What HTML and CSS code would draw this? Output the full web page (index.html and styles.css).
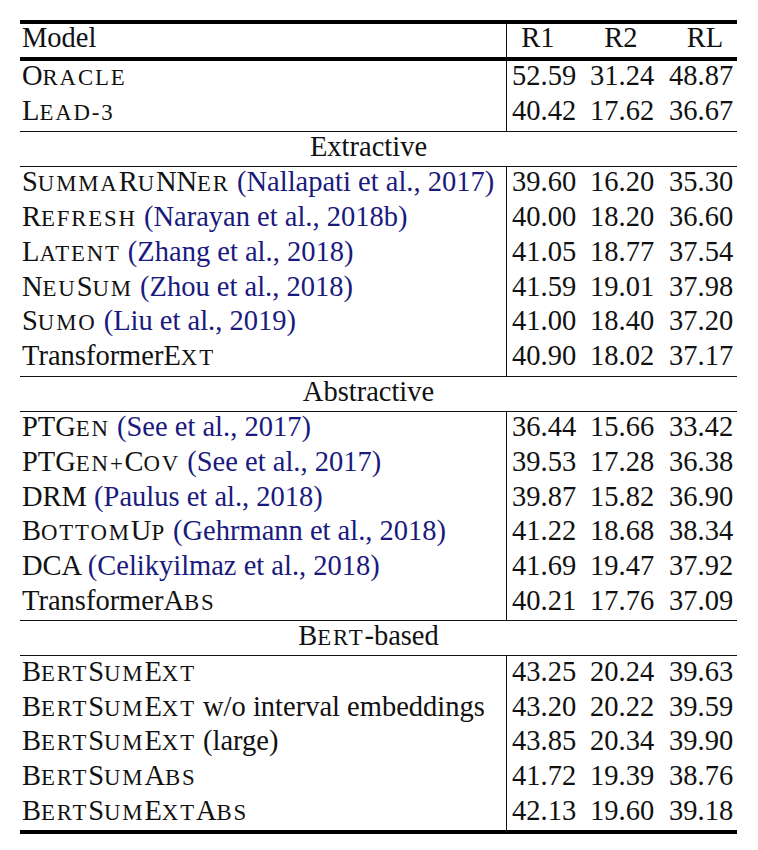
FILE: index.html
```html
<!DOCTYPE html>
<html>
<head>
<meta charset="utf-8">
<title>Results table</title>
<link rel="stylesheet" href="styles.css">
</head>
<body>
<table class="results">
  <colgroup>
    <col class="c-model">
    <col class="c-r1">
    <col class="c-r2">
    <col class="c-rl">
  </colgroup>
  <thead>
    <tr class="head">
      <th class="model">Model</th>
      <th class="n1">R1</th>
      <th class="n2">R2</th>
      <th class="n3">RL</th>
    </tr>
  </thead>
  <tbody class="first">
    <tr><td class="model">O<span class="sc">racle</span></td><td class="n1">52.59</td><td class="n2">31.24</td><td class="n3">48.87</td></tr>
    <tr><td class="model">L<span class="sc">ead-3</span></td><td class="n1">40.42</td><td class="n2">17.62</td><td class="n3">36.67</td></tr>
  </tbody>
  <tbody>
    <tr class="group"><td colspan="4">Extractive</td></tr>
    <tr><td class="model">S<span class="sc">umma</span>R<span class="sc">u</span>NN<span class="sc">er</span> <span class="cite">(Nallapati et al., 2017)</span></td><td class="n1">39.60</td><td class="n2">16.20</td><td class="n3">35.30</td></tr>
    <tr><td class="model">R<span class="sc">efresh</span> <span class="cite">(Narayan et al., 2018b)</span></td><td class="n1">40.00</td><td class="n2">18.20</td><td class="n3">36.60</td></tr>
    <tr><td class="model">L<span class="sc">atent</span> <span class="cite">(Zhang et al., 2018)</span></td><td class="n1">41.05</td><td class="n2">18.77</td><td class="n3">37.54</td></tr>
    <tr><td class="model">N<span class="sc">eu</span>S<span class="sc">um</span> <span class="cite">(Zhou et al., 2018)</span></td><td class="n1">41.59</td><td class="n2">19.01</td><td class="n3">37.98</td></tr>
    <tr><td class="model">S<span class="sc">umo</span> <span class="cite">(Liu et al., 2019)</span></td><td class="n1">41.00</td><td class="n2">18.40</td><td class="n3">37.20</td></tr>
    <tr><td class="model">TransformerE<span class="sc">xt</span></td><td class="n1">40.90</td><td class="n2">18.02</td><td class="n3">37.17</td></tr>
  </tbody>
  <tbody>
    <tr class="group"><td colspan="4">Abstractive</td></tr>
    <tr><td class="model">PTG<span class="sc">en</span> <span class="cite">(See et al., 2017)</span></td><td class="n1">36.44</td><td class="n2">15.66</td><td class="n3">33.42</td></tr>
    <tr><td class="model">PTG<span class="sc">en+</span>C<span class="sc">ov</span> <span class="cite">(See et al., 2017)</span></td><td class="n1">39.53</td><td class="n2">17.28</td><td class="n3">36.38</td></tr>
    <tr><td class="model">DRM <span class="cite">(Paulus et al., 2018)</span></td><td class="n1">39.87</td><td class="n2">15.82</td><td class="n3">36.90</td></tr>
    <tr><td class="model">B<span class="sc">ottom</span>U<span class="sc">p</span> <span class="cite">(Gehrmann et al., 2018)</span></td><td class="n1">41.22</td><td class="n2">18.68</td><td class="n3">38.34</td></tr>
    <tr><td class="model">DCA <span class="cite">(Celikyilmaz et al., 2018)</span></td><td class="n1">41.69</td><td class="n2">19.47</td><td class="n3">37.92</td></tr>
    <tr><td class="model">TransformerA<span class="sc">bs</span></td><td class="n1">40.21</td><td class="n2">17.76</td><td class="n3">37.09</td></tr>
  </tbody>
  <tbody class="last">
    <tr class="group"><td colspan="4">B<span class="sc">ert</span>-based</td></tr>
    <tr><td class="model">B<span class="sc">ert</span>S<span class="sc">um</span>E<span class="sc">xt</span></td><td class="n1">43.25</td><td class="n2">20.24</td><td class="n3">39.63</td></tr>
    <tr><td class="model">B<span class="sc">ert</span>S<span class="sc">um</span>E<span class="sc">xt</span> w/o interval embeddings</td><td class="n1">43.20</td><td class="n2">20.22</td><td class="n3">39.59</td></tr>
    <tr><td class="model">B<span class="sc">ert</span>S<span class="sc">um</span>E<span class="sc">xt</span> (large)</td><td class="n1">43.85</td><td class="n2">20.34</td><td class="n3">39.90</td></tr>
    <tr><td class="model">B<span class="sc">ert</span>S<span class="sc">um</span>A<span class="sc">bs</span></td><td class="n1">41.72</td><td class="n2">19.39</td><td class="n3">38.76</td></tr>
    <tr><td class="model">B<span class="sc">ert</span>S<span class="sc">um</span>E<span class="sc">xt</span>A<span class="sc">bs</span></td><td class="n1">42.13</td><td class="n2">19.60</td><td class="n3">39.18</td></tr>
  </tbody>
</table>
</body>
</html>
```

FILE: styles.css
```css
html, body {
  margin: 0;
  padding: 0;
  background: #ffffff;
}

body {
  font-family: "Liberation Serif", "Times New Roman", serif;
  font-size: 28.5px;
  color: #111111;
}

.results {
  font-family: "Liberation Serif", "Times New Roman", serif;
  margin: 20px 0 0 20px;
  width: 717px;
  table-layout: fixed;
  border-collapse: separate;
  border-spacing: 0;
  font-size: 28.5px;
}

.c-model { width: 486px; }
.c-r1 { width: 84px; }
.c-r2 { width: 79px; }
.c-rl { width: 68px; }

.results th,
.results td {
  padding: 2.4px 0 6.4px 0;
  line-height: 26px;
  font-weight: normal;
  white-space: nowrap;
  text-align: left;
  vertical-align: top;
}

.results .model {
  padding-left: 2px;
}

.results .n1 {
  border-left: 1px solid #111111;
  padding-left: 5px;
  padding-right: 16px;
}

.results .n2 {
  padding-left: 0;
  padding-right: 17px;
}

.results .n3 {
  padding-left: 0;
  padding-right: 6px;
}

/* header row */
.results .head th {
  border-top: 4px solid #000000;
  border-bottom: 4px solid #000000;
  line-height: 26.2px;
  padding-top: 1px;
  padding-bottom: 5.8px;
}

.results .head .n1,
.results .head .n2,
.results .head .n3 {
  text-align: center;
}

.results .head .n1 { padding-right: 22px; padding-left: 1px; }
.results .head .n3 { padding-left: 6px; padding-right: 2px; }

.results .first td {
  line-height: 28.6px;
  padding-top: 1px;
  padding-bottom: 5.4px;
}

/* group heading rows */
.results .group td {
  border-top: 1px solid #111111;
  border-bottom: 1px solid #111111;
  text-align: center;
  line-height: 26px;
  padding: 2px 20px 6px 0;
}

.results .last tr:last-child td {
  border-bottom: 4px solid #000000;
}

.cite {
  color: #1a1a7e;
}

.sc {
  text-transform: uppercase;
  font-size: 0.8em;
  letter-spacing: 0.08em;
  line-height: 0;
}
```
